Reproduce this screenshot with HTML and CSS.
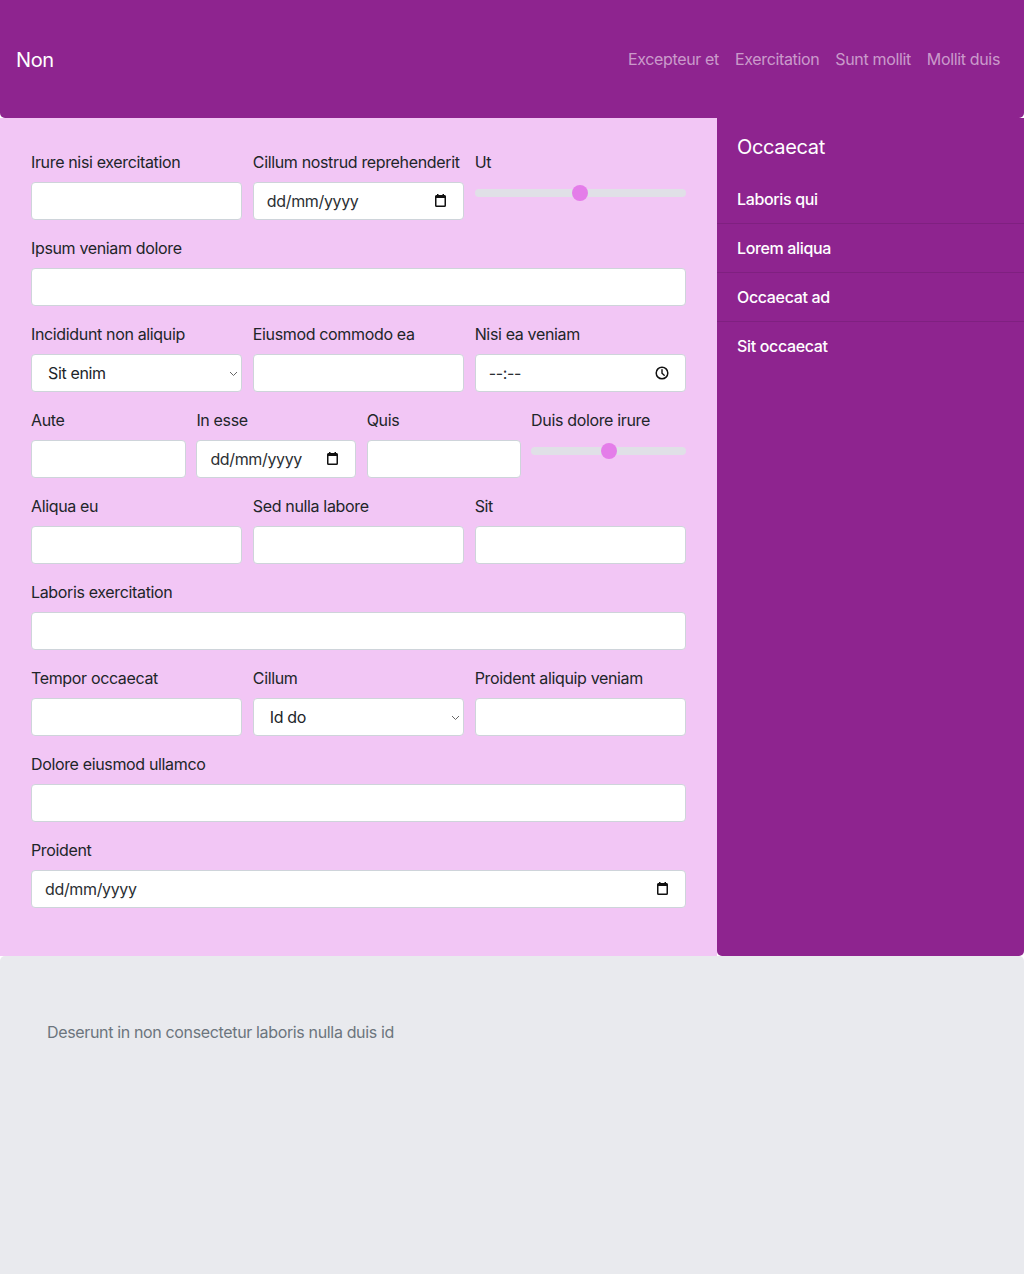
FILE: index.html
```html
<!DOCTYPE html>
<html lang="la">
<head>
<meta charset="utf-8">
<title>Non</title>
<link rel="stylesheet" href="styles.css">
</head>
<body>
<header class="topbar">
  <div class="brand">Non</div>
  <nav class="nav">
    <a href="#">Excepteur et</a>
    <a href="#">Exercitation</a>
    <a href="#">Sunt mollit</a>
    <a href="#">Mollit duis</a>
  </nav>
</header>
<div class="layout">
  <main class="form-area">
    <form class="form">
      <div class="row cols-3">
        <div class="field"><label>Irure nisi exercitation</label><input class="control" type="text"></div>
        <div class="field"><label>Cillum nostrud reprehenderit</label>
          <div class="icon-wrap">
            <input class="control" type="text" placeholder="dd/mm/yyyy">
            <svg class="ico cal" width="11" height="13" viewBox="0 0 11 13"><rect x="0.75" y="1.75" width="9.5" height="10.5" rx="0.8" fill="none" stroke="#111" stroke-width="1.5"/><rect x="0.75" y="1.5" width="9.5" height="2.5" fill="#111"/><rect x="2" y="0" width="1.5" height="2" fill="#111"/><rect x="7.5" y="0" width="1.5" height="2" fill="#111"/></svg>
          </div>
        </div>
        <div class="field"><label>Ut</label><input class="range" type="range"></div>
      </div>
      <div class="row">
        <div class="field"><label>Ipsum veniam dolore</label><input class="control" type="text"></div>
      </div>
      <div class="row cols-3">
        <div class="field"><label>Incididunt non aliquip</label>
          <div class="icon-wrap">
            <select class="control select"><option>Sit enim</option></select>
            <svg class="chev" width="9" height="6" viewBox="0 0 9 6"><path d="M1 1l3.5 3.5L8 1" fill="none" stroke="#666" stroke-width="1"/></svg>
          </div>
        </div>
        <div class="field"><label>Eiusmod commodo ea</label><input class="control" type="text"></div>
        <div class="field"><label>Nisi ea veniam</label>
          <div class="icon-wrap">
            <input class="control" type="text" placeholder="--:--">
            <svg class="ico clock" width="14" height="14" viewBox="0 0 14 14"><circle cx="7" cy="7" r="5.8" fill="none" stroke="#111" stroke-width="1.5"/><path d="M7 3.6V7.2L9.2 9.2" fill="none" stroke="#111" stroke-width="1.4" stroke-linecap="round"/></svg>
          </div>
        </div>
      </div>
      <div class="row cols-4">
        <div class="field"><label>Aute</label><input class="control" type="text"></div>
        <div class="field"><label>In esse</label>
          <div class="icon-wrap">
            <input class="control" type="text" placeholder="dd/mm/yyyy">
            <svg class="ico cal" width="11" height="13" viewBox="0 0 11 13"><rect x="0.75" y="1.75" width="9.5" height="10.5" rx="0.8" fill="none" stroke="#111" stroke-width="1.5"/><rect x="0.75" y="1.5" width="9.5" height="2.5" fill="#111"/><rect x="2" y="0" width="1.5" height="2" fill="#111"/><rect x="7.5" y="0" width="1.5" height="2" fill="#111"/></svg>
          </div>
        </div>
        <div class="field"><label>Quis</label><input class="control" type="text"></div>
        <div class="field"><label>Duis dolore irure</label><input class="range" type="range"></div>
      </div>
      <div class="row cols-3">
        <div class="field"><label>Aliqua eu</label><input class="control" type="text"></div>
        <div class="field"><label>Sed nulla labore</label><input class="control" type="text"></div>
        <div class="field"><label>Sit</label><input class="control" type="text"></div>
      </div>
      <div class="row">
        <div class="field"><label>Laboris exercitation</label><input class="control" type="text"></div>
      </div>
      <div class="row cols-3">
        <div class="field"><label>Tempor occaecat</label><input class="control" type="text"></div>
        <div class="field"><label>Cillum</label>
          <div class="icon-wrap">
            <select class="control select"><option>Id do</option></select>
            <svg class="chev" width="9" height="6" viewBox="0 0 9 6"><path d="M1 1l3.5 3.5L8 1" fill="none" stroke="#666" stroke-width="1"/></svg>
          </div>
        </div>
        <div class="field"><label>Proident aliquip veniam</label><input class="control" type="text"></div>
      </div>
      <div class="row">
        <div class="field"><label>Dolore eiusmod ullamco</label><input class="control" type="text"></div>
      </div>
      <div class="row">
        <div class="field"><label>Proident</label>
          <div class="icon-wrap">
            <input class="control" type="text" placeholder="dd/mm/yyyy">
            <svg class="ico cal" width="11" height="13" viewBox="0 0 11 13"><rect x="0.75" y="1.75" width="9.5" height="10.5" rx="0.8" fill="none" stroke="#111" stroke-width="1.5"/><rect x="0.75" y="1.5" width="9.5" height="2.5" fill="#111"/><rect x="2" y="0" width="1.5" height="2" fill="#111"/><rect x="7.5" y="0" width="1.5" height="2" fill="#111"/></svg>
          </div>
        </div>
      </div>
    </form>
  </main>
  <aside class="sidebar">
    <div class="side-title">Occaecat</div>
    <ul class="side-list">
      <li>Laboris qui</li>
      <li>Lorem aliqua</li>
      <li>Occaecat ad</li>
      <li>Sit occaecat</li>
    </ul>
  </aside>
</div>
<footer class="footer">
  <p>Deserunt in non consectetur laboris nulla duis id</p>
</footer>
</body>
</html>
```
FILE: styles.css
```css
* { box-sizing: border-box; }
html, body { margin: 0; padding: 0; }
body {
  background: #ffffff;
  font-family: Inter, "Liberation Sans", Arial, sans-serif;
  font-size: 16px;
  line-height: 24px;
  letter-spacing: -0.35px;
  color: #212529;
}
.topbar {
  height: 118px;
  background: #8e248f;
  border-radius: 0 0 5px 5px;
  display: flex;
  align-items: center;
  justify-content: space-between;
  padding: 0 24px 0 16px;
}
.brand {
  color: #ffffff;
  font-size: 20px;
  line-height: 28px;
  padding-top: 2px;
}
.nav { display: flex; gap: 16px; }
.nav a {
  color: rgba(255, 255, 255, 0.55);
  text-decoration: none;
  font-size: 16px;
}
.layout { display: flex; }
.form-area {
  flex: 0 0 717px;
  background: #f2c6f5;
  padding: 32px 31px 48px 31px;
}
.form { display: flex; flex-direction: column; gap: 16px; }
.row { display: grid; grid-template-columns: 1fr; column-gap: 10.5px; }
.row.cols-3 { grid-template-columns: 1fr 1fr 1fr; }
.row.cols-4 { grid-template-columns: 155fr 160fr 154fr 155fr; }
.field { display: flex; flex-direction: column; min-width: 0; }
.field label {
  display: block;
  line-height: 24px;
  margin-bottom: 8px;
  color: #212529;
  white-space: nowrap;
}
.control {
  width: 100%;
  height: 38px;
  border: 1px solid #ced4da;
  border-radius: 4px;
  background: #ffffff;
  padding: 6px 13px;
  font-family: inherit;
  font-size: 16px;
  letter-spacing: -0.35px;
  color: #212529;
  margin: 0;
  display: block;
}
.control::placeholder { color: #2b2f33; opacity: 1; }
.icon-wrap { position: relative; }
.select {
  appearance: none;
  -webkit-appearance: none;
  padding-left: 16px;
}
.chev {
  position: absolute;
  right: 4px;
  top: 17px;
  pointer-events: none;
}
.ico {
  position: absolute;
  pointer-events: none;
}
.ico.cal { right: 18px; top: 12px; }
.ico.clock { right: 17px; top: 12px; }
.range {
  -webkit-appearance: none;
  appearance: none;
  width: 100%;
  height: 22px;
  margin: 0;
  background: transparent;
}
.range::-webkit-slider-runnable-track {
  height: 8px;
  background: #e0e0e7;
  border-radius: 4px;
}
.range::-webkit-slider-thumb {
  -webkit-appearance: none;
  width: 16px;
  height: 16px;
  border-radius: 50%;
  background: #e47de9;
  border: none;
  margin-top: -4px;
}
.sidebar {
  flex: 1;
  background: #8e248f;
  border-radius: 0 0 5px 5px;
  color: #ffffff;
}
.side-title {
  font-size: 20px;
  line-height: 28px;
  padding: 15px 20px 14px 20px;
}
.side-list { list-style: none; margin: 0; padding: 0; }
.side-list li {
  padding: 12px 20px;
  border-bottom: 1px solid rgba(0, 0, 0, 0.1);
  font-weight: 500;
}
.side-list li:last-child { border-bottom: none; }
.footer {
  background: #e9eaee;
  height: 318px;
  border-radius: 5px 5px 0 0;
  padding: 64px 47px;
}
.footer p { margin: 0; color: #6c757d; }
```
